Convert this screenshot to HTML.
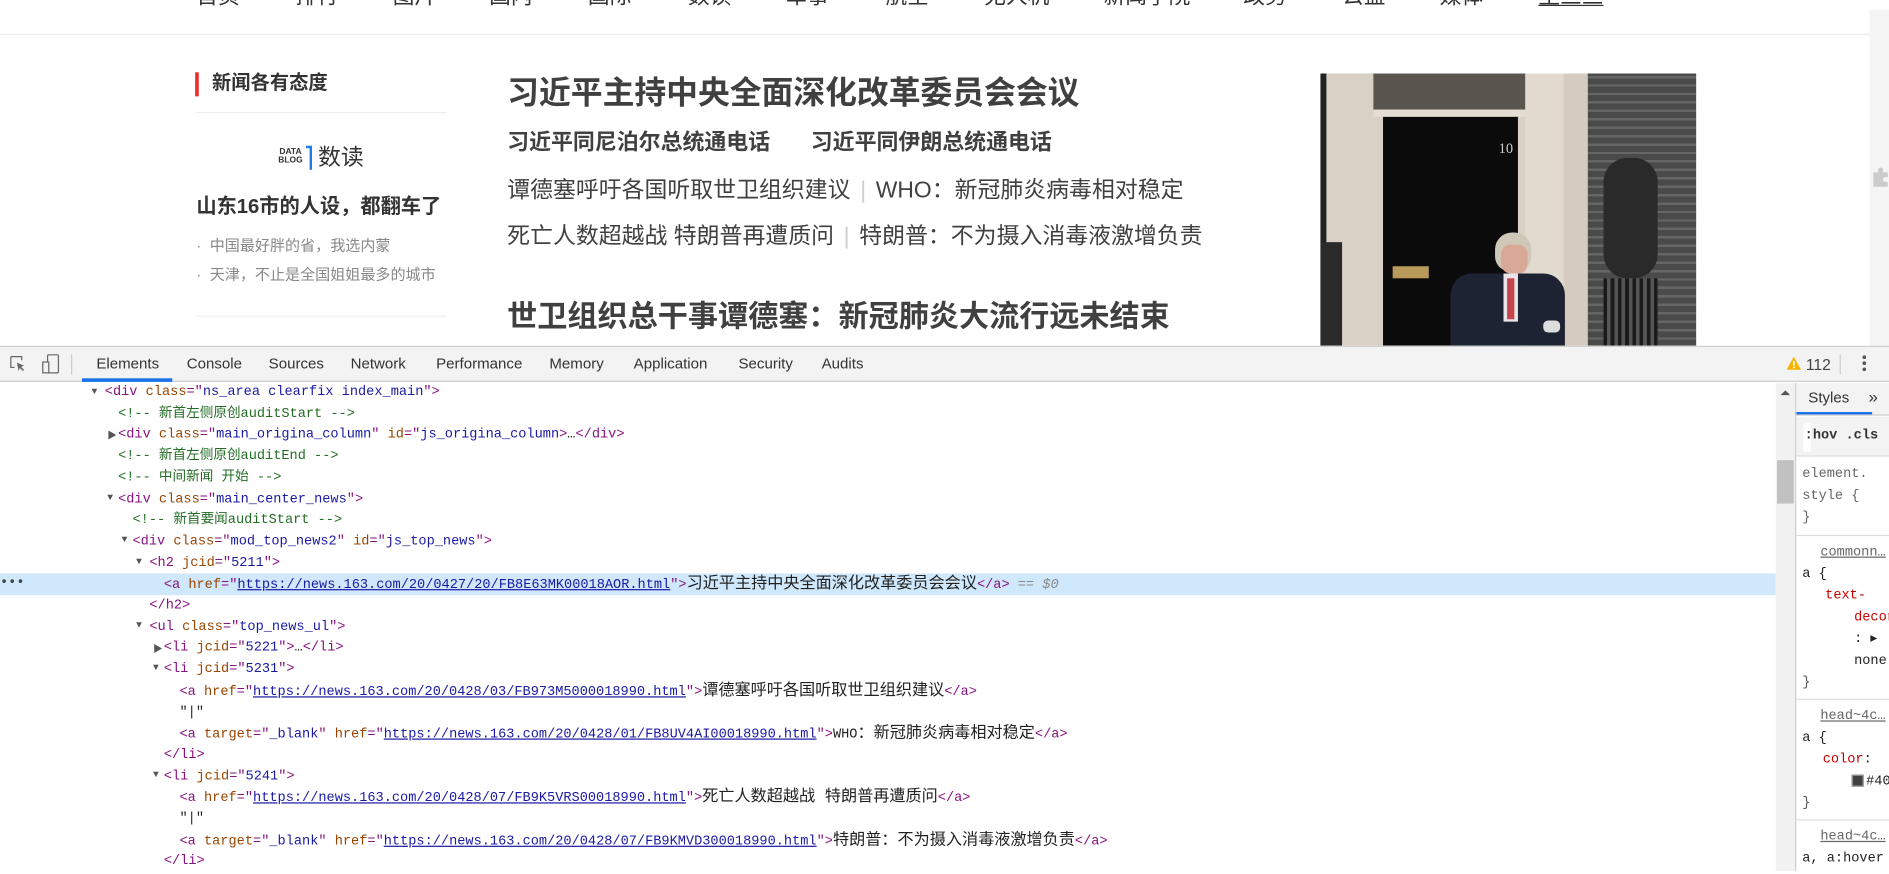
<!DOCTYPE html>
<html><head><meta charset="utf-8">
<style>
*{margin:0;padding:0;box-sizing:border-box}
html,body{width:1889px;height:870px;overflow:hidden;background:#fff}
#s{position:absolute;left:0;top:0;width:1568px;height:722px;transform:scale(1.20472);transform-origin:0 0;font-family:"Liberation Sans","Noto Sans CJK SC",sans-serif;color:#404040}
.a{position:absolute;white-space:nowrap}
.nav{font-size:18px;color:#333;top:-14px;line-height:22px}
#dt{position:absolute;left:0;top:287px;width:1568px;height:435px;background:#fff;border-top:1px solid #ccc}
#tb{position:absolute;left:0;top:0;width:1568px;height:29px;background:#f3f3f3;border-bottom:1px solid #ccc;font-size:12.5px;color:#333}
#tb .t{position:absolute;top:7px}
.code{position:absolute;left:0;top:30px;width:1474px;height:405px;font-family:"Liberation Mono","Noto Sans CJK SC",monospace;font-size:11.3px}
.ln{position:absolute;height:17.7px;line-height:17.7px;white-space:nowrap;color:#222}
.g{color:#881280}.n{color:#994500}.v{color:#1a1aa6}.c{color:#236e25}
.u{color:#1a1aa6;text-decoration:underline}
.k{font-size:13.4px;line-height:17.7px}
.tri{position:absolute;font-size:8px;color:#555}
</style></head><body><div id="s">
<div class="a nav" style="left:163px">首页</div>
<div class="a nav" style="left:245px">排行</div>
<div class="a nav" style="left:326px">图片</div>
<div class="a nav" style="left:406px">国内</div>
<div class="a nav" style="left:488px">国际</div>
<div class="a nav" style="left:571px">数读</div>
<div class="a nav" style="left:652px">军事</div>
<div class="a nav" style="left:735px">航空</div>
<div class="a nav" style="left:817px">无人机</div>
<div class="a nav" style="left:916px">新闻学院</div>
<div class="a nav" style="left:1032px">政务</div>
<div class="a nav" style="left:1114px">公益</div>
<div class="a nav" style="left:1195px">媒体</div>
<div class="a nav" style="left:1277px;text-decoration:underline">王三三</div>
<div class="a" style="left:0;top:28px;width:1552px;height:1px;background:#ececec"></div>
<div class="a" style="left:1552px;top:8px;width:16px;height:279px;background:#f5f5f5"></div>
<svg class="a" style="left:1553px;top:138px" width="15" height="18" viewBox="0 0 15 18"><path d="M2 5h4V3a2 2 0 0 1 4 0v2h4v4h-2a2 2 0 0 0 0 4h2v4H2z" fill="#ccc"/></svg>

<div class="a" style="left:162px;top:60px;width:3px;height:20px;background:#e8312f"></div>
<div class="a" style="left:176px;top:60px;font-size:16px;font-weight:bold;color:#333;line-height:20px">新闻各有态度</div>
<div class="a" style="left:163px;top:93px;width:208px;height:1px;background:#eee"></div>
<div class="a" style="left:231px;top:123px;font-size:7px;font-weight:bold;line-height:7px;color:#333;text-align:center">DATA<br>BLOG</div>
<div class="a" style="left:254px;top:121px;width:5px;height:20px;border-top:2px solid #1e7fe0;border-right:2px solid #1e7fe0"></div>
<div class="a" style="left:264px;top:120px;font-size:19px;color:#333;line-height:24px">数读</div>
<div class="a" style="left:163px;top:161px;font-size:16.8px;font-weight:bold;color:#333;line-height:22px">山东16市的人设，都翻车了</div>
<div class="a" style="left:163px;top:196px;font-size:12.5px;color:#888;line-height:16px">·&nbsp; 中国最好胖的省，我选内蒙</div>
<div class="a" style="left:163px;top:220px;font-size:12.5px;color:#888;line-height:16px">·&nbsp; 天津，不止是全国姐姐最多的城市</div>
<div class="a" style="left:163px;top:262px;width:208px;height:1px;background:#eee"></div>

<div class="a" style="left:421px;top:60px;font-size:26.4px;font-weight:bold;line-height:34px">习近平主持中央全面深化改革委员会会议</div>
<div class="a" style="left:421px;top:106px;font-size:18.2px;font-weight:bold;line-height:24px">习近平同尼泊尔总统通电话</div>
<div class="a" style="left:673px;top:106px;font-size:18.2px;font-weight:bold;line-height:24px">习近平同伊朗总统通电话</div>
<div class="a" style="left:421px;top:147px;font-size:19px;line-height:24px">谭德塞呼吁各国听取世卫组织建议<span style="color:#ccc;margin:0 8px">|</span>WHO：新冠肺炎病毒相对稳定</div>
<div class="a" style="left:421px;top:185px;font-size:19px;line-height:24px">死亡人数超越战 特朗普再遭质问<span style="color:#ccc;margin:0 8px">|</span>特朗普：不为摄入消毒液激增负责</div>
<div class="a" style="left:421px;top:246px;font-size:25px;font-weight:bold;line-height:34px">世卫组织总干事谭德塞：新冠肺炎大流行远未结束</div>

<div class="a" style="left:1096px;top:61px;width:312px;height:226px;background:#d9d0c6;overflow:hidden">
 <div class="a" style="left:0;top:0;width:5px;height:226px;background:#222"></div>
 <div class="a" style="left:0;top:140px;width:18px;height:86px;background:#2a2a2a"></div>
 <div class="a" style="left:44px;top:0;width:128px;height:30px;background:#5a554e"></div>
 <div class="a" style="left:44px;top:30px;width:128px;height:6px;background:#e6ddd2"></div>
 <div class="a" style="left:52px;top:36px;width:112px;height:190px;background:#0b0b0b"></div>
 <div class="a" style="left:148px;top:55px;color:#ccc;font-family:'Liberation Serif',serif;font-size:12px">10</div>
 <div class="a" style="left:60px;top:160px;width:30px;height:10px;background:#b89a5a"></div>
 <div class="a" style="left:170px;top:0;width:50px;height:226px;background:#e2d9cf"></div>
 <div class="a" style="left:202px;top:0;width:20px;height:226px;background:#d5cbc0"></div>
 <div class="a" style="left:222px;top:0;width:90px;height:226px;background:repeating-linear-gradient(0deg,#4a4a4a 0 5px,#666 5px 7px)"></div>
 <div class="a" style="left:235px;top:70px;width:45px;height:100px;background:#2a2a2a;border-radius:20px"></div>
 <div class="a" style="left:235px;top:170px;width:45px;height:56px;background:repeating-linear-gradient(90deg,#1a1a1a 0 3px,#555 3px 6px)"></div>
 <div class="a" style="left:145px;top:132px;width:30px;height:32px;background:#cfc8b8;border-radius:14px 14px 12px 12px"></div>
 <div class="a" style="left:150px;top:142px;width:22px;height:24px;background:#d9a998;border-radius:8px"></div>
 <div class="a" style="left:108px;top:166px;width:95px;height:60px;background:#1d2333;border-radius:18px 18px 0 0"></div>
 <div class="a" style="left:152px;top:166px;width:12px;height:40px;background:#e8e4ea"></div>
 <div class="a" style="left:155px;top:170px;width:6px;height:34px;background:#c8444c"></div>
 <div class="a" style="left:185px;top:205px;width:14px;height:10px;background:#ddd;border-radius:4px"></div>
</div>

<div id="dt">
 <div id="tb">
  <svg class="a" style="left:8px;top:7px" width="14" height="14" viewBox="0 0 14 14"><path d="M1 1h9v3M1 1v9h3" fill="none" stroke="#666"/><path d="M6 6l6 2.5-2.5 1 2.5 2.5-1 1-2.5-2.5-1 2.5z" fill="#666"/></svg>
  <svg class="a" style="left:34px;top:5px" width="16" height="18" viewBox="0 0 16 18"><rect x="5.5" y="1.5" width="9" height="15" rx="1" fill="none" stroke="#666"/><rect x="1.5" y="7.5" width="5" height="9" fill="#f3f3f3" stroke="#666"/></svg>
  <div class="a" style="left:59px;top:6px;width:1px;height:17px;background:#ccc"></div>
  <div class="t" style="left:80px">Elements</div>
  <div class="a" style="left:68px;top:26px;width:75px;height:3px;background:#1a73e8"></div>
  <div class="t" style="left:155px">Console</div>
  <div class="t" style="left:223px">Sources</div>
  <div class="t" style="left:291px">Network</div>
  <div class="t" style="left:362px">Performance</div>
  <div class="t" style="left:456px">Memory</div>
  <div class="t" style="left:526px">Application</div>
  <div class="t" style="left:613px">Security</div>
  <div class="t" style="left:682px">Audits</div>
  <svg class="a" style="left:1483px;top:8px" width="12" height="11" viewBox="0 0 12 11"><path d="M6 0L12 11H0z" fill="#f4b400"/><rect x="5.3" y="3.5" width="1.4" height="4" fill="#fff"/><rect x="5.3" y="8.3" width="1.4" height="1.4" fill="#fff"/></svg>
  <div class="t" style="left:1499px;font-size:13px;color:#444">112</div>
  <div class="a" style="left:1527px;top:6px;width:1px;height:17px;background:#ccc"></div>
  <div class="a" style="left:1546px;top:7px;width:3px;height:3px;border-radius:2px;background:#555;box-shadow:0 5px 0 #555,0 10px 0 #555"></div>
 </div>
 <div class="code">
  <div class="ln" style="left:0;top:158px;width:1474px;background:#cfe8fc"></div>
  <div class="ln" style="left:0;top:158px;color:#444">•••</div>
  <span class="tri" style="left:76px;top:3px">▼</span><div class="ln" style="left:87px;top:0"><span class="g">&lt;div </span><span class="n">class</span><span class="g">="</span><span class="v">ns_area clearfix index_main</span><span class="g">"&gt;</span></div>
  <div class="ln c" style="left:98px;top:17.7px">&lt;!-- 新首左侧原创auditStart --&gt;</div>
  <span class="tri" style="left:89px;top:38px">▶</span><div class="ln" style="left:98px;top:35.4px"><span class="g">&lt;div </span><span class="n">class</span><span class="g">="</span><span class="v">main_origina_column</span><span class="g">" </span><span class="n">id</span><span class="g">="</span><span class="v">js_origina_column</span><span class="g">&gt;</span>…<span class="g">&lt;/div&gt;</span></div>
  <div class="ln c" style="left:98px;top:53.1px">&lt;!-- 新首左侧原创auditEnd --&gt;</div>
  <div class="ln c" style="left:98px;top:70.8px">&lt;!-- 中间新闻 开始 --&gt;</div>
  <span class="tri" style="left:89px;top:91px">▼</span><div class="ln" style="left:98px;top:88.5px"><span class="g">&lt;div </span><span class="n">class</span><span class="g">="</span><span class="v">main_center_news</span><span class="g">"&gt;</span></div>
  <div class="ln c" style="left:110px;top:106.2px">&lt;!-- 新首要闻auditStart --&gt;</div>
  <span class="tri" style="left:101px;top:126px">▼</span><div class="ln" style="left:110px;top:123.9px"><span class="g">&lt;div </span><span class="n">class</span><span class="g">="</span><span class="v">mod_top_news2</span><span class="g">" </span><span class="n">id</span><span class="g">="</span><span class="v">js_top_news</span><span class="g">"&gt;</span></div>
  <span class="tri" style="left:113px;top:144px">▼</span><div class="ln" style="left:124px;top:141.6px"><span class="g">&lt;h2 </span><span class="n">jcid</span><span class="g">="</span><span class="v">5211</span><span class="g">"&gt;</span></div>
  <div class="ln" style="left:136px;top:159.3px"><span class="g">&lt;a </span><span class="n">href</span><span class="g">="</span><span class="u">https://news.163.com/20/0427/20/FB8E63MK00018AOR.html</span><span class="g">"&gt;</span><span class="k">习近平主持中央全面深化改革委员会会议</span><span class="g">&lt;/a&gt;</span> <span style="color:#888;font-style:italic">== $0</span></div>
  <div class="ln g" style="left:124px;top:177px">&lt;/h2&gt;</div>
  <span class="tri" style="left:113px;top:197px">▼</span><div class="ln" style="left:124px;top:194.7px"><span class="g">&lt;ul </span><span class="n">class</span><span class="g">="</span><span class="v">top_news_ul</span><span class="g">"&gt;</span></div>
  <span class="tri" style="left:127px;top:215px">▶</span><div class="ln" style="left:136px;top:212.4px"><span class="g">&lt;li </span><span class="n">jcid</span><span class="g">="</span><span class="v">5221</span><span class="g">"&gt;</span>…<span class="g">&lt;/li&gt;</span></div>
  <span class="tri" style="left:127px;top:232px">▼</span><div class="ln" style="left:136px;top:230.1px"><span class="g">&lt;li </span><span class="n">jcid</span><span class="g">="</span><span class="v">5231</span><span class="g">"&gt;</span></div>
  <div class="ln" style="left:149px;top:247.8px"><span class="g">&lt;a </span><span class="n">href</span><span class="g">="</span><span class="u">https://news.163.com/20/0428/03/FB973M5000018990.html</span><span class="g">"&gt;</span><span class="k">谭德塞呼吁各国听取世卫组织建议</span><span class="g">&lt;/a&gt;</span></div>
  <div class="ln" style="left:149px;top:265.5px">"|"</div>
  <div class="ln" style="left:149px;top:283.2px"><span class="g">&lt;a </span><span class="n">target</span><span class="g">="</span><span class="v">_blank</span><span class="g">" </span><span class="n">href</span><span class="g">="</span><span class="u">https://news.163.com/20/0428/01/FB8UV4AI00018990.html</span><span class="g">"&gt;</span>WHO<span class="k">：新冠肺炎病毒相对稳定</span><span class="g">&lt;/a&gt;</span></div>
  <div class="ln g" style="left:136px;top:300.9px">&lt;/li&gt;</div>
  <span class="tri" style="left:127px;top:321px">▼</span><div class="ln" style="left:136px;top:318.6px"><span class="g">&lt;li </span><span class="n">jcid</span><span class="g">="</span><span class="v">5241</span><span class="g">"&gt;</span></div>
  <div class="ln" style="left:149px;top:336.3px"><span class="g">&lt;a </span><span class="n">href</span><span class="g">="</span><span class="u">https://news.163.com/20/0428/07/FB9K5VRS00018990.html</span><span class="g">"&gt;</span><span class="k">死亡人数超越战 特朗普再遭质问</span><span class="g">&lt;/a&gt;</span></div>
  <div class="ln" style="left:149px;top:354px">"|"</div>
  <div class="ln" style="left:149px;top:371.7px"><span class="g">&lt;a </span><span class="n">target</span><span class="g">="</span><span class="v">_blank</span><span class="g">" </span><span class="n">href</span><span class="g">="</span><span class="u">https://news.163.com/20/0428/07/FB9KMVD300018990.html</span><span class="g">"&gt;</span><span class="k">特朗普：不为摄入消毒液激增负责</span><span class="g">&lt;/a&gt;</span></div>
  <div class="ln g" style="left:136px;top:389.4px">&lt;/li&gt;</div>
 </div>
 <div class="a" style="left:1474px;top:30px;width:16px;height:405px;background:#f1f1f1"></div>
 <div class="a" style="left:1478px;top:36px;width:0;height:0;border-left:4px solid transparent;border-right:4px solid transparent;border-bottom:4px solid #555"></div>
 <div class="a" style="left:1475px;top:94px;width:14px;height:36px;background:#c1c1c1"></div>
 <div class="a" style="left:1490px;top:30px;width:78px;height:405px;background:#fff;border-left:1px solid #ccc;font-family:'Liberation Mono',monospace;font-size:11.3px;color:#555;overflow:hidden">
  <div class="a" style="left:0;top:0;width:78px;height:27px;background:#f3f3f3;border-bottom:1px solid #ccc"></div>
  <div class="a" style="left:10px;top:5px;font-family:'Liberation Sans',sans-serif;font-size:12.5px;color:#333">Styles</div>
  <div class="a" style="left:0;top:24px;width:63px;height:2px;background:#1a73e8"></div>
  <div class="a" style="left:60px;top:3px;font-family:'Liberation Sans',sans-serif;font-size:14px;color:#333">»</div>
  <div class="a" style="left:0;top:28px;width:78px;height:33px;background:#f3f3f3;border-bottom:1px solid #ddd"></div>
  <div class="a" style="left:6px;top:33px;width:6px;height:24px;background:#fff"></div>
  <div class="a" style="left:7px;top:38px;font-weight:bold;color:#333">:hov .cls</div>
  <div class="a" style="left:5px;top:67px;line-height:18px;color:#666">element.<br>style {<br>}</div>
  <div class="a" style="left:0;top:126px;width:78px;height:1px;background:#ddd"></div>
  <div class="a" style="left:20px;top:132px;line-height:18px;text-decoration:underline;color:#666">commonn…</div>
  <div class="a" style="left:5px;top:150px;line-height:18px;color:#222">a {</div>
  <div class="a" style="left:24px;top:168px;line-height:18px;color:#c80000">text-</div>
  <div class="a" style="left:48px;top:186px;line-height:18px;color:#c80000">decor</div>
  <div class="a" style="left:48px;top:204px;line-height:18px;color:#222">: ▸</div>
  <div class="a" style="left:48px;top:222px;line-height:18px;color:#222">none;</div>
  <div class="a" style="left:5px;top:240px;line-height:18px">}</div>
  <div class="a" style="left:0;top:262px;width:78px;height:1px;background:#ddd"></div>
  <div class="a" style="left:20px;top:268px;line-height:18px;text-decoration:underline;color:#666">head~4c…</div>
  <div class="a" style="left:5px;top:286px;line-height:18px;color:#222">a {</div>
  <div class="a" style="left:22px;top:304px;line-height:18px;color:#c80000">color<span style="color:#222">:</span></div>
  <div class="a" style="left:46px;top:325px;width:10px;height:10px;background:#404040;border:1px solid #999"></div>
  <div class="a" style="left:58px;top:322px;line-height:18px;color:#222">#40</div>
  <div class="a" style="left:5px;top:340px;line-height:18px">}</div>
  <div class="a" style="left:0;top:362px;width:78px;height:1px;background:#ddd"></div>
  <div class="a" style="left:20px;top:368px;line-height:18px;text-decoration:underline;color:#666">head~4c…</div>
  <div class="a" style="left:5px;top:386px;line-height:18px;color:#222">a, a:hover</div>
 </div>
</div>
</div></body></html>
